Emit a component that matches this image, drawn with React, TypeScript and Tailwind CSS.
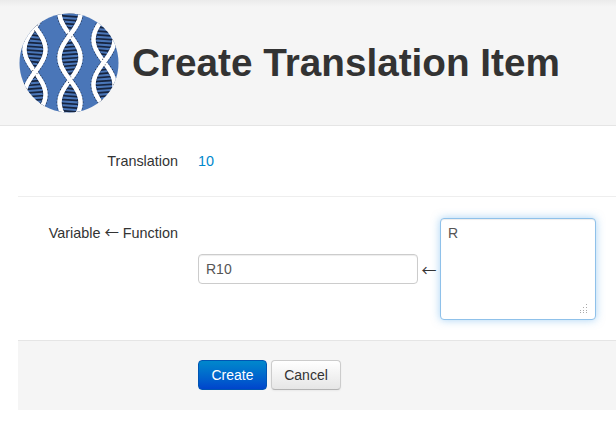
import React from 'react';

// one double helix: two crossing strands plus the rungs between them
function Helix({ cx, cross }: { cx: number; cross: number }) {
  const amp = 10.5;
  const at = (y: number) => amp * Math.sin((Math.PI * (y - cross)) / 45);
  const strand = (sign: number) => {
    let d = '';
    for (let y = 5; y <= 122; y += 1) d += `${d ? 'L' : 'M'}${(cx + sign * at(y)).toFixed(1)} ${y} `;
    return d;
  };
  const rungs: React.ReactNode[] = [];
  for (let y = 5; y <= 122; y += 3.8) {
    rungs.push(
      <line key={y} x1={cx - at(y)} y1={y + 0.7} x2={cx + at(y)} y2={y - 0.7} stroke="#16243f" strokeWidth="1.7" />,
    );
  }
  return (
    <g>
      {rungs}
      {[1, -1].map((s) => (
        <g key={s}>
          <path d={strand(s)} fill="none" stroke="#16243f" strokeWidth="6" strokeDasharray="1 2" />
          <path d={strand(s)} fill="none" stroke="#fff" strokeWidth="4.5" />
        </g>
      ))}
    </g>
  );
}

function Logo() {
  return (
    <svg width="100" height="100" viewBox="19 13 100 100" className="shrink-0">
      <defs>
        <clipPath id="logo-clip">
          <circle cx="69" cy="63" r="49.5" />
        </clipPath>
      </defs>
      <circle cx="69" cy="63" r="49.5" fill="#4a76b8" />
      <g clipPath="url(#logo-clip)">
        <Helix cx={35} cross={72} />
        <Helix cx={70} cross={35} />
        <Helix cx={104} cross={62} />
      </g>
    </svg>
  );
}

export default function App() {
  return (
    <div className="min-h-[434px] bg-white font-['Liberation_Sans',Arial,sans-serif] text-[14px] leading-5 text-[#333]">
      <div className="flex h-[126px] items-center gap-[13px] border-b border-[#e5e5e5] bg-[linear-gradient(#ebebeb,#f5f5f5_7px)] pl-[19px]">
        <Logo />
        <h1 className="text-[38.7px] font-bold leading-10 text-[#333]">Create Translation Item</h1>
      </div>

      <div className="ml-[18px]">
        <div className="flex h-[71px] items-center border-b border-[#eee] text-[14.4px]">
          <div className="w-[160px] text-right">Translation</div>
          <div className="ml-5 text-[#0088cc]">10</div>
        </div>

        <div className="flex h-[144px] items-start border-b border-[#e5e5e5] pt-[21px]">
          <div className="mt-[5px] w-[160px] whitespace-nowrap text-right text-[14.4px] leading-5">
            Variable <span className="font-['Noto_Sans_CJK_SC',sans-serif] leading-none">←</span> Function
          </div>
          <div className="ml-5 flex items-center">
            <input
              readOnly
              value="R10"
              className="h-[30px] w-[220px] rounded border border-[#ccc] bg-white px-[7px] text-[14px] text-[#555] shadow-[inset_0_1px_1px_rgba(0,0,0,0.075)] outline-none"
            />
            <span className="w-[22px] text-center font-['Noto_Sans_CJK_SC',sans-serif] text-[15px] leading-none text-[#333]">←</span>
            <div className="relative h-[102px] w-[156px]">
              <textarea
                readOnly
                value="R"
                className="block h-full w-full resize-none rounded border border-[#8fc1ea] bg-white px-[7px] py-1 text-[14px] leading-5 text-[#555] shadow-[inset_0_1px_1px_rgba(0,0,0,0.075),0_0_8px_rgba(82,168,236,0.5)] outline-none"
              />
              <svg width="10" height="10" viewBox="0 0 10 10" className="absolute bottom-[6px] right-[7px]" fill="#aaa">
                <rect x="7" y="0" width="1" height="1" />
                <rect x="4" y="3" width="1" height="1" />
                <rect x="7" y="3" width="1" height="1" />
                <rect x="1" y="6" width="1" height="1" />
                <rect x="4" y="6" width="1" height="1" />
                <rect x="7" y="6" width="1" height="1" />
                <rect x="1" y="8" width="1" height="1" />
                <rect x="4" y="8" width="1" height="1" />
                <rect x="7" y="8" width="1" height="1" />
              </svg>
            </div>
          </div>
        </div>

        <div className="flex h-[69px] items-center gap-1 bg-[#f5f5f5] pb-[2px] pl-[180px]">
          <button className="h-[30px] w-[69px] rounded border border-[#0055b3] bg-gradient-to-b from-[#0088cc] to-[#0044cc] text-white">
            Create
          </button>
          <button className="h-[30px] w-[70px] rounded border border-[#ccc] border-b-[#b3b3b3] bg-gradient-to-b from-white to-[#e6e6e6] text-[#333] shadow-[0_1px_2px_rgba(0,0,0,0.05)]">
            Cancel
          </button>
        </div>
      </div>
    </div>
  );
}
